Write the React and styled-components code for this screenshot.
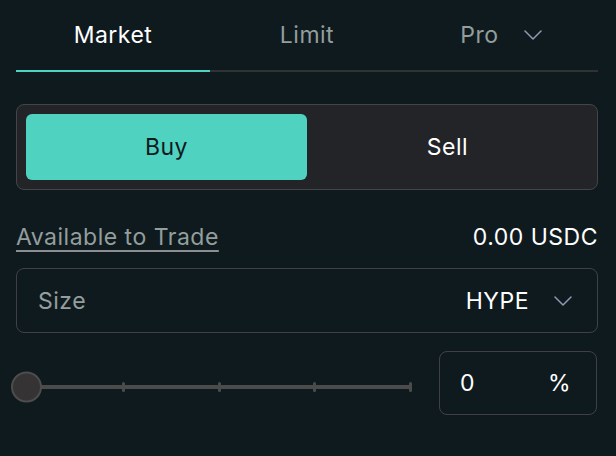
import styled, { createGlobalStyle } from "styled-components";

const colors = {
  background: "#0f1a1f",
  accent: "#50d2c1",
  border: "#3e4246",
  line: "#303234",
  muted: "#949e9c",
  chevron: "#8f9ab5",
  track: "#4b4b4b",
};

const GlobalStyle = createGlobalStyle`
  html, body {
    margin: 0;
    padding: 0;
    background: ${colors.background};
    font-family: Inter, "Noto Sans", sans-serif;
    letter-spacing: 0.5px;
    color: #fff;
  }
  * {
    box-sizing: border-box;
  }
`;

const Panel = styled.div`
  width: 616px;
  height: 456px;
  padding: 0 18px 0 16px;
  display: flex;
  flex-direction: column;
`;

const Tabs = styled.div`
  display: grid;
  grid-template-columns: repeat(3, 1fr);
  height: 72px;
  border-bottom: 2px solid ${colors.line};
`;

const Tab = styled.div`
  display: flex;
  align-items: center;
  justify-content: center;
  gap: 25px;
  font-size: 23px;
  color: ${({ $active }) => ($active ? "#fff" : colors.muted)};
  margin-bottom: -2px;
  border-bottom: 2px solid
    ${({ $active }) => ($active ? colors.accent : "transparent")};
`;

const SideSwitch = styled.div`
  margin-top: 32px;
  display: grid;
  grid-template-columns: 1fr 1fr;
  padding: 9px;
  height: 86px;
  background: #232428;
  border: 1.5px solid #434549;
  border-radius: 8px;
`;

const SideButton = styled.div`
  display: flex;
  align-items: center;
  justify-content: center;
  border-radius: 6px;
  font-size: 23px;
  background: ${({ $active }) => ($active ? colors.accent : "transparent")};
  color: ${({ $active }) => ($active ? "#0f1a1f" : "#fff")};
`;

const InfoRow = styled.div`
  margin-top: 32px;
  display: flex;
  justify-content: space-between;
  align-items: center;
  height: 30px;
  font-size: 23px;
`;

const InfoLabel = styled.span`
  color: ${colors.muted};
  text-decoration: underline;
  text-decoration-color: #8a8f92;
  text-decoration-thickness: 2px;
  text-underline-offset: 5px;
`;

const InfoValue = styled.span`
  color: #fff;
`;

const SizeField = styled.div`
  margin-top: 16px;
  height: 65px;
  display: flex;
  align-items: center;
  justify-content: space-between;
  padding: 0 25px 0 21px;
  border: 1.5px solid ${colors.border};
  border-radius: 8px;
  font-size: 23px;
`;

const FieldLabel = styled.span`
  color: ${colors.muted};
`;

const AssetPicker = styled.div`
  display: flex;
  align-items: center;
  gap: 25px;
  color: #fff;
`;

const SliderRow = styled.div`
  margin-top: 18px;
  display: flex;
  align-items: flex-start;
  gap: 27px;
`;

const SliderArea = styled.div`
  position: relative;
  margin-left: 10px;
  width: 386px;
  height: 72px;
  display: flex;
  align-items: center;
`;

const Track = styled.div`
  position: relative;
  width: 100%;
  height: 10px;
  display: flex;
  align-items: center;
  justify-content: space-between;
  &::before {
    content: "";
    position: absolute;
    left: 0;
    right: 0;
    top: 3px;
    height: 4px;
    background: ${colors.track};
  }
`;

const Tick = styled.span`
  position: relative;
  width: 3px;
  height: 10px;
  border-radius: 1.5px;
  background: ${colors.track};
`;

const Thumb = styled.div`
  position: absolute;
  left: -15px;
  top: 50%;
  transform: translateY(-50%);
  width: 31px;
  height: 31px;
  border-radius: 50%;
  background: #353333;
  border: 2px solid #4d4d4d;
`;

const PercentField = styled.div`
  width: 158px;
  height: 64px;
  display: flex;
  align-items: center;
  justify-content: space-between;
  padding: 0 25px 0 20px;
  border: 1.5px solid ${colors.border};
  border-radius: 8px;
  font-size: 23px;
`;

const Chevron = () => (
  <svg width="18" height="10" viewBox="0 0 18 10" fill="none">
    <path
      d="M1 1l8 8 8-8"
      stroke={colors.chevron}
      strokeWidth="1.5"
      strokeLinecap="round"
      strokeLinejoin="round"
    />
  </svg>
);

const ticks = [0, 25, 50, 75, 100];

export default function App() {
  return (
    <>
      <GlobalStyle />
      <Panel>
        <Tabs>
          <Tab $active>Market</Tab>
          <Tab>Limit</Tab>
          <Tab>
            Pro
            <Chevron />
          </Tab>
        </Tabs>

        <SideSwitch>
          <SideButton $active>Buy</SideButton>
          <SideButton>Sell</SideButton>
        </SideSwitch>

        <InfoRow>
          <InfoLabel>Available to Trade</InfoLabel>
          <InfoValue>0.00 USDC</InfoValue>
        </InfoRow>

        <SizeField>
          <FieldLabel>Size</FieldLabel>
          <AssetPicker>
            HYPE
            <Chevron />
          </AssetPicker>
        </SizeField>

        <SliderRow>
          <SliderArea>
            <Track>
              {ticks.map((t) => (
                <Tick key={`tick-${t}`} />
              ))}
            </Track>
            <Thumb />
          </SliderArea>
          <PercentField>
            <span>0</span>
            <span>%</span>
          </PercentField>
        </SliderRow>
      </Panel>
    </>
  );
}
